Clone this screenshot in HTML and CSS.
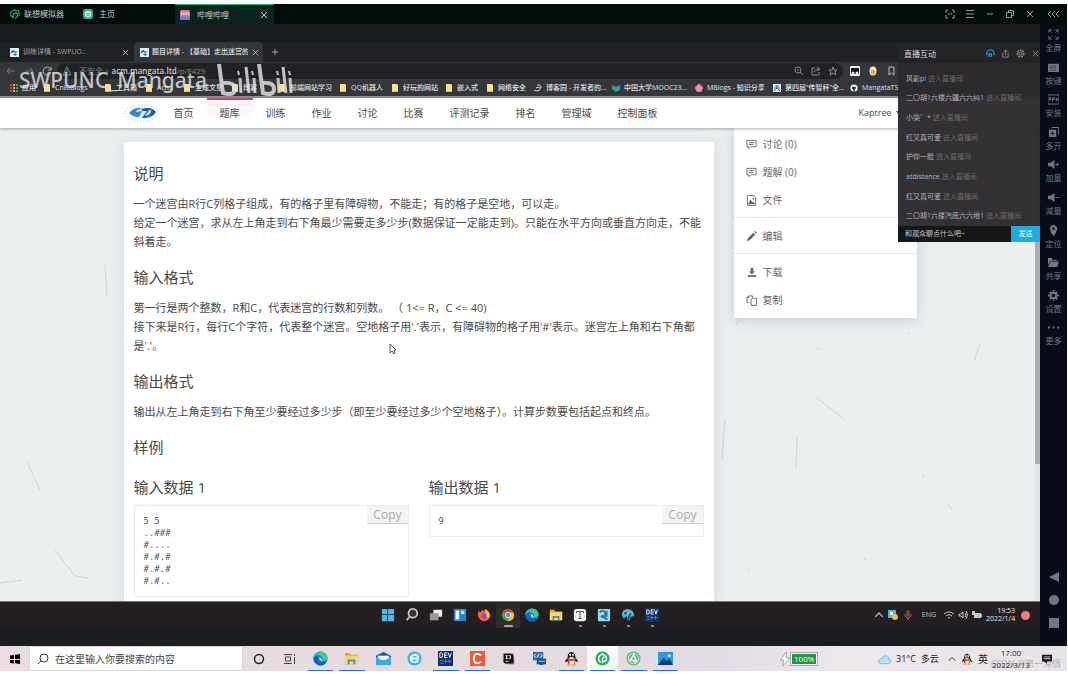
FILE: index.html
```html
<!DOCTYPE html>
<html lang="zh-CN">
<head>
<meta charset="utf-8">
<title>题目详情 - 【基础】走出迷宫的</title>
<link rel="stylesheet" href="styles.css">
</head>
<body>
<svg class="defs" aria-hidden="true">
  <symbol id="site" viewBox="0 0 10 10"><rect width="10" height="10" fill="#e8f1f8"/><path d="M1 4q2-3 4-1t4 0q-1 3-4 2t-4 2zM3 7q3-2 5 0l-2 2z" fill="#2a6fb0"/></symbol>
  <symbol id="folder" viewBox="0 0 8 10"><path d="M1 1h5l1 1v7H1z" fill="#fbe08a"/><path d="M1 8h6v1H1z" fill="#e5b94b"/></symbol>
  <symbol id="x" viewBox="0 0 10 10"><path d="M2 2l6 6M8 2l-6 6" stroke="currentColor" fill="none"/></symbol>
  <symbol id="chat" viewBox="0 0 12 12"><path d="M1 1.500h10v7H5l-2 2v-2H1zM3 4h6M3 6h5" stroke="currentColor" fill="none"/></symbol>
  <symbol id="speaker" viewBox="0 0 12 12"><path d="M0 4h3l4-3v10L3 8H0z" fill="currentColor"/></symbol>
  <symbol id="chevron" viewBox="0 0 8 8"><path d="M1 5.500l3-3 3 3" stroke="currentColor" fill="none"/></symbol>
  <symbol id="edge" viewBox="0 0 16 16"><circle cx="8" cy="8" r="7.500" fill="#1683d3"/><path d="M.5 8C.5 3 5 .5 8 .5c5 0 7.500 4 7.500 6.500 0 3-3 4-6 3 2-2 0-5-3-5-3 0-6 1-6 3z" fill="#42c98d"/><path d="M.5 8c0-3 3-5 6-3-3 1-2 6 2 7 3 0 5-1 6-1-1 3-4 4.500-6 4.500-4.500 0-8-3.500-8-7.500z" fill="#1263b5"/><path d="M.5 8C.5 4 4 1 7 1l3 4Q5 2 .5 8z" fill="#2db4dc"/><path d="M7 7c-1 2 1 4 4 4l-2-1q1-2-2-3z" fill="#e8f6ff"/></symbol>
  <symbol id="explorer" viewBox="0 0 16 16"><path d="M1 2h5l1 2h8v10H1z" fill="#e9aa23"/><path d="M1 5h14v9H1z" fill="#ffd767"/><path d="M4 14V9h8v5h-2v-3H6v3z" fill="#3d8fcf"/></symbol>
  <symbol id="dev" viewBox="0 0 16 16"><rect width="16" height="16" fill="#172d65"/><path d="M2 2v5h1q2 0 2-2.500T3 2zM10 2H7v5h3M7 4.500h3M11 2l1.500 5L14 2" stroke="#fff" fill="none"/><path d="M2 10h4M8 9v4M6 11h4M12 9v4M10 11h4M2 13h4" stroke="#3d8be2" fill="none"/></symbol>
  <symbol id="qq" viewBox="0 0 16 16"><path d="M4 7C3-1 13-1 12 7q3 3 3 5l-3-1-1 3H5l-1-3-3 1q0-2 3-5z" fill="#171717"/><ellipse cx="8" cy="10.500" rx="3.500" ry="4" fill="#fff"/><circle cx="6.500" cy="4" r="1.200" fill="#fff"/><circle cx="9.500" cy="4" r="1.200" fill="#fff"/><path d="M5 6h6l-3 1.500z" fill="#ffb21c"/><path d="M3.500 7.500q4.500 2 9 0v2q-4 1.500-6.500 1V13H4z" fill="#e4322c"/><path d="M3 14h4v1.500H3zM9 14h4v1.500H9z" fill="#f2a11b"/></symbol>
</svg>

<header class="emu-bar">
  <div class="emu-brand">
    <svg viewBox="0 0 12 12"><path d="M4 10.500L1 8V4l4-3 3 1M4 11V6l3-2 2 2v3l-3 2M9 1l2 3v4" stroke="#20b05a" stroke-width="1.500" fill="none"/></svg>
    <span>联想模拟器</span>
  </div>
  <a class="emu-home" href="#home">
    <svg viewBox="0 0 12 12"><rect width="12" height="12" rx="3" fill="#23b889"/><circle cx="6" cy="6" r="3" fill="none" stroke="#fff" stroke-width="1.500"/><circle cx="6" cy="6" r="1" fill="#fff"/></svg>
    <span>主页</span>
  </a>
  <div class="emu-tab">
    <svg viewBox="0 0 12 12"><rect width="12" height="12" rx="2" fill="#f4688f"/><path d="M0 8h12v2q0 2-2 2H2q-2 0-2-2z" fill="#498df0"/><path d="M2 3v3M4 3v3M6 3v3M8 3v3M10 3v3" stroke="#fff"/></svg>
    <span>哔哩哔哩</span>
    <button type="button" aria-label="关闭标签"><svg viewBox="0 0 10 10"><use href="#x"/></svg></button>
  </div>
  <div class="emu-window">
    <button type="button" aria-label="截图"><svg viewBox="0 0 10 10"><path d="M1 4V1h2M7 1h2v3M9 6v3H7M3 9H1V6M3 5h4" stroke="currentColor" fill="none"/></svg></button>
    <button type="button" aria-label="菜单"><svg viewBox="0 0 10 10"><path d="M1 1.500h8M1 5h8M1 8.500h8" stroke="currentColor"/></svg></button>
    <button type="button" aria-label="最小化"><svg viewBox="0 0 10 10"><path d="M2 5h6" stroke="currentColor"/></svg></button>
    <button type="button" aria-label="还原"><svg viewBox="0 0 10 10"><path d="M1.500 3.500h5v5h-5zM3.500 3V1.500h5v5H7" stroke="currentColor" fill="none"/></svg></button>
    <button type="button" aria-label="关闭"><svg viewBox="0 0 10 10"><use href="#x"/></svg></button>
    <button type="button" aria-label="收起"><svg viewBox="0 0 12 10"><path d="M4 2L1 5l3 3M8 2L5 5l3 3M12 2L9 5l3 3" stroke="currentColor" fill="none"/></svg></button>
  </div>
</header>

<div class="stage">
  <main class="screen">
    <div class="browser">
      <div class="tabs">
        <div class="tab"><svg viewBox="0 0 10 10"><use href="#site"/></svg><span>训练详情 - SWPUO.:</span><button type="button" aria-label="关闭"><svg viewBox="0 0 10 10"><use href="#x"/></svg></button></div>
        <div class="tab active"><svg viewBox="0 0 10 10"><use href="#site"/></svg><span>题目详情 - 【基础】走出迷宫的</span><button type="button" aria-label="关闭"><svg viewBox="0 0 10 10"><use href="#x"/></svg></button></div>
        <button class="plus" type="button" aria-label="新标签"><svg viewBox="0 0 10 10"><path d="M5 1v8M1 5h8" stroke="currentColor"/></svg></button>
      </div>
      <div class="address">
        <div class="history">
          <svg viewBox="0 0 10 10"><path d="M9 5H1M4 2L1 5l3 3" stroke="currentColor" fill="none"/></svg>
          <svg viewBox="0 0 10 10"><path d="M1 5h8M6 2l3 3-3 3" stroke="currentColor" fill="none"/></svg>
          <svg class="lit" viewBox="0 0 10 10"><path d="M8.500 3A4 4 0 1 0 9 6M9 1v3H6" stroke="currentColor" fill="none"/></svg>
        </div>
        <div class="url">
          <svg viewBox="0 0 10 10"><path d="M5 1l4 8H1zM5 4v3" stroke="currentColor" fill="none"/></svg>
          <p>不安全 | <b>acm.mangata.ltd</b>/p/F429</p>
          <svg class="push" viewBox="0 0 10 10"><circle cx="4" cy="4" r="3" stroke="currentColor" fill="none"/><path d="M6 6l3 3M3 4h2" stroke="currentColor"/></svg>
          <svg viewBox="0 0 10 10"><path d="M4 2H1v7h7V6M3 6q1-3 5-3M6 1l3 2-3 2" stroke="currentColor" fill="none"/></svg>
          <svg viewBox="0 0 10 10"><path d="M5 1l1 3h3L7 6l1 3-3-2-3 2 1-3-2-2h3z" stroke="currentColor" fill="none"/></svg>
        </div>
        <div class="extensions">
          <svg viewBox="0 0 10 10"><rect width="10" height="10" rx="1" fill="#eee"/><path d="M1 2h8v6H1z" fill="#171717"/><circle cx="3" cy="7" r="1.500" fill="#eee"/><circle cx="7" cy="7" r="1.500" fill="#eee"/></svg>
          <svg viewBox="0 0 10 10"><ellipse cx="5" cy="5" rx="3.500" ry="4.500" fill="#f4eee4"/><circle cx="5" cy="6" r="2.500" fill="#efac45"/></svg>
          <svg viewBox="0 0 10 10"><path d="M3 1h5v8L5.500 7 3 9z" stroke="currentColor" fill="none"/></svg>
        </div>
      </div>
      <nav class="bookmarks" aria-label="书签">
        <a href="#b"><svg viewBox="0 0 8 10"><path d="M1 1v8" stroke="#cf4a39" stroke-width="2" stroke-dasharray="2 1"/><path d="M4 1v8" stroke="#e9b83e" stroke-width="2" stroke-dasharray="2 1"/><path d="M7 1v8" stroke="#43a35b" stroke-width="2" stroke-dasharray="2 1"/></svg>应用</a>
        <a href="#b"><svg><use href="#folder"/></svg>CnBlBlogs</a>
        <a href="#b"><svg><use href="#folder"/></svg>工具箱</a>
        <a href="#b"><svg><use href="#folder"/></svg>Acm</a>
        <a href="#b"><svg><use href="#folder"/></svg>生成文章</a>
        <a href="#b"><svg><use href="#folder"/></svg>博客</a>
        <a href="#b"><svg><use href="#folder"/></svg>前端网站学习</a>
        <a href="#b"><svg><use href="#folder"/></svg>QQ机器人</a>
        <a href="#b"><svg><use href="#folder"/></svg>好玩的网站</a>
        <a href="#b"><svg><use href="#folder"/></svg>嵌入式</a>
        <a href="#b"><svg><use href="#folder"/></svg>网络安全</a>
        <a href="#b"><svg viewBox="0 0 8 10"><path d="M0 7q5 2 6-1T2 5M3 2q4-1 4 3" stroke="#ddd" fill="none"/></svg>博客园 - 开发者的...</a>
        <a href="#b"><svg viewBox="0 0 8 10"><path d="M0 2l4 2v5L0 6z" fill="#3ea25d"/><path d="M4 4l4-2v5L4 9z" fill="#239bd7"/></svg>中国大学MOOC23...</a>
        <a href="#b"><svg viewBox="0 0 8 10"><circle cx="4" cy="3" r="2" fill="#f28eac"/><circle cx="2" cy="5" r="2" fill="#f28eac"/><circle cx="6" cy="5" r="2" fill="#f28eac"/><circle cx="3" cy="7" r="2" fill="#f28eac"/><circle cx="5" cy="7" r="2" fill="#f28eac"/></svg>MBlogs - 知识分享</a>
        <a href="#b"><svg viewBox="0 0 8 10"><rect y="1" width="8" height="8" fill="#e8f2ff"/><path d="M2 3h4M1 5h6M4 2v3L1 8M4 5l3 3" stroke="#2871d3" fill="none"/></svg>第四届“传智杯”全...</a>
        <a href="#b"><svg viewBox="0 0 10 10"><circle cx="5" cy="5" r="4.500" fill="#fff"/><path d="M3 3l1 .5h2L7 3l.5 2.500L6 7v2.500H4V7L2.500 5.500z" fill="#35363a"/></svg>MangataTS</a>
      </nav>
      <div class="watermark">
        <span>SWPUNC_Mangata</span>
        <svg viewBox="0 0 76 36" fill="none" stroke="currentColor" stroke-width="4"><path d="M2 2l4 29q12 3 12-4t-12-6"/><path d="M23 16l1 15M29 5l3 26M37 16l1 15" stroke-width="3"/><path d="M21 9l1 4M35 9l1 4" stroke-width="2"/><path d="M42 2l4 29q11 3 11-4t-11-6"/><path d="M61 16l1 15M66 5l3 26M73 16l1 15" stroke-width="3"/><path d="M60 9l1 4M72 9l1 4" stroke-width="2"/></svg>
      </div>
    </div>

    <nav class="site-nav">
      <div class="site-inner">
        <svg class="logo" viewBox="0 0 37 18"><ellipse cx="18" cy="9" rx="17" ry="8" fill="#fff" stroke="#a9bccb" stroke-dasharray="1 2"/><ellipse cx="19" cy="9" rx="13" ry="6" fill="#d6e8f5"/><path d="M5 9q6-7 14-4-7 0-7 3l6-1-3 6q-6 0-10-4z" fill="#3a86c6"/><path d="M18 5q9-3 14 3-4 6-14 6l5-7h-5zM25 6l-4 6q7-1 6-6z" fill="#145d9f"/></svg>
        <ul>
          <li><a href="#1">首页</a></li><li class="on"><a href="#2">题库</a></li><li><a href="#3">训练</a></li><li><a href="#4">作业</a></li><li><a href="#5">讨论</a></li><li><a href="#6">比赛</a></li><li><a href="#7">评测记录</a></li><li><a href="#8">排名</a></li><li><a href="#9">管理域</a></li><li><a href="#10">控制面板</a></li>
        </ul>
        <a class="user" href="#user">Kaptree <svg viewBox="0 0 6 6"><path d="M0 1h6L3 5z" fill="currentColor"/></svg></a>
      </div>
    </nav>

    <div class="page">
      <svg class="threads" viewBox="0 0 1040 473" preserveAspectRatio="xMinYMin slice" fill="none" stroke="#d0d3d5"><path d="M105 137l2 31M27 334l13 28M55 422l20 26 14 2M0 455l22-3M980 216l-6 17M797 309l-1 31M817 270l27 21M725 291l-3 40M739 190l-3 8"/><path d="M817 221h2M908 205h2M922 348h2M748 442h2M864 431h2M948 377l4 4" stroke="#c8cccf"/></svg>
      <div class="columns">
        <article class="problem">
          <h2>说明</h2>
          <p>一个迷宫由R行C列格子组成，有的格子里有障碍物，不能走；有的格子是空地，可以走。<br>给定一个迷宫，求从左上角走到右下角最少需要走多少步(数据保证一定能走到)。只能在水平方向或垂直方向走，不能<br>斜着走。</p>
          <h2>输入格式</h2>
          <p>第一行是两个整数，R和C，代表迷宫的行数和列数。 （ 1&lt;= R，C &lt;= 40)<br>接下来是R行，每行C个字符，代表整个迷宫。空地格子用'.'表示，有障碍物的格子用'#'表示。迷宫左上角和右下角都<br>是'.'。</p>
          <h2>输出格式</h2>
          <p>输出从左上角走到右下角至少要经过多少步（即至少要经过多少个空地格子）。计算步数要包括起点和终点。</p>
          <h2>样例</h2>
          <div class="samples">
            <section><h2>输入数据 1</h2><div class="code"><pre>5 5
..###
#....
#.#.#
#.#.#
#.#..</pre><button type="button">Copy</button></div></section>
            <section><h2>输出数据 1</h2><div class="code"><pre>9</pre><button type="button">Copy</button></div></section>
          </div>
        </article>
        <aside class="menu">
          <a href="#d"><svg><use href="#chat"/></svg>讨论 (0)</a>
          <a href="#s"><svg><use href="#chat"/></svg>题解 (0)</a>
          <a href="#f"><svg viewBox="0 0 12 12"><path d="M1.500.500h7l2 2v9h-9z" stroke="currentColor" fill="none"/><path d="M2 10l3-5 2 3 1-1 2 3z" fill="currentColor"/><circle cx="8" cy="4" r="1" fill="currentColor"/></svg>文件</a>
          <hr>
          <a href="#e"><svg viewBox="0 0 12 12"><path d="M1 11l1-3 6-6 2 2-6 6zM9 1l1-1 2 2-1 1z" fill="currentColor"/></svg>编辑</a>
          <hr>
          <a href="#l"><svg viewBox="0 0 12 12"><path d="M5 1h3v4h2L6.500 8 3 5h2zM2 9h9v2H2z" fill="currentColor"/></svg>下载</a>
          <a href="#c"><svg viewBox="0 0 12 12"><path d="M3 8H1V3l2-2h4v2M7 3.500h4.500v8h-6V5.500zM3 1v2H1" stroke="currentColor" fill="none"/></svg>复制</a>
        </aside>
      </div>
      <div class="scroll"><div class="thumb"></div></div>
      <svg class="cursor" viewBox="0 0 8 12"><path d="M1 1v9l2-2 2 3 1-1-1-3h2z" fill="#fff" stroke="#555"/></svg>
    </div>

    <footer class="dock">
      <div class="dock-apps">
        <button type="button" aria-label="开始"><svg viewBox="0 0 16 16"><path d="M1 1h6v6H1zM8 1h7v6H8zM1 8h6v7H1zM8 8h7v7H8z" fill="#48b9ef"/></svg></button>
        <button type="button" aria-label="搜索"><svg viewBox="0 0 16 16"><circle cx="9" cy="6" r="5" stroke="#ccc" stroke-width="2" fill="#333"/><path d="M5 10l-3 4" stroke="#ccc" stroke-width="2"/></svg></button>
        <button type="button" aria-label="任务视图"><svg viewBox="0 0 16 16"><path d="M5 2h10v8H5z" fill="#eee"/><path d="M1 6h10v8H1z" fill="#999"/></svg></button>
        <button type="button" aria-label="小组件"><svg viewBox="0 0 16 16"><rect x="1" y="1" width="14" height="14" fill="#2784d5"/><path d="M3 3h4v10H3z" fill="#fff"/><path d="M9 3h4v4H9z" fill="#bce5ff"/></svg></button>
        <button type="button" aria-label="Firefox"><svg viewBox="0 0 16 16"><path d="M2 3l2 2 2-3 2 2 2-3q6 4 5 9-2 5-7 5-6-1-7-7z" fill="#fb6830"/><path d="M9 1q6 4 5 9l-4 1z" fill="#ffc437"/><circle cx="8" cy="9" r="3" fill="#854be0"/></svg></button>
        <button class="current" type="button" aria-label="Chrome"><svg viewBox="0 0 16 16"><circle cx="8" cy="8" r="7" fill="#38a656"/><path d="M2 4q2-3 6-3t6 4H8L5 10z" fill="#df4335"/><path d="M14 5H8l3 5-4 5q8 0 8-7z" fill="#f8c43a"/><circle cx="8" cy="8" r="3" fill="#4889e8" stroke="#fff"/></svg></button>
        <button type="button" aria-label="Edge"><svg><use href="#edge"/></svg></button>
        <button type="button" aria-label="文件"><svg><use href="#explorer"/></svg></button>
        <button class="open" type="button" aria-label="Typora"><svg viewBox="0 0 16 16"><rect x="1" y="1" width="14" height="14" rx="3" fill="#f5f5f5"/><path d="M4 6V4h8v2M8 4v8M6 12h4" stroke="#444" fill="none"/></svg></button>
        <button class="open" type="button" aria-label="工具"><svg viewBox="0 0 16 16"><rect x="1" y="1" width="14" height="14" rx="1" fill="#9ed8ee"/><path d="M3 5q4-4 6 0t-3 5l6 3M11 3v6H5" stroke="#23739a" stroke-width="2" fill="none"/></svg></button>
        <button class="open" type="button" aria-label="画图"><svg viewBox="0 0 16 16"><path d="M1 8q0-7 7-7 7 1 7 8l-4 1-1 4-3-1V9l-4 3z" fill="#55b7d5"/><circle cx="5" cy="6" r="1.500" fill="#17568e"/><circle cx="9" cy="4" r="1" fill="#ee9a47"/><path d="M7 15l4-9" stroke="#244c80" stroke-width="2"/></svg></button>
        <button class="open" type="button" aria-label="Dev-C++"><svg><use href="#dev"/></svg></button>
      </div>
      <div class="dock-tray">
        <svg viewBox="0 0 8 8"><use href="#chevron"/></svg>
        <svg viewBox="0 0 10 10"><path d="M0 0h8v8H0z" fill="#45b5e9"/><circle cx="7" cy="7" r="3" fill="#f0c137"/><path d="M2 2h3v3H2z" fill="#fff"/></svg>
        <svg class="mic" viewBox="0 0 10 10"><path d="M4 1h2v5H4zM2 4v2l2 2h2l2-2V4M5 8v2" stroke="#b45a67" fill="none"/></svg>
        <span class="lang">ENG</span>
        <svg viewBox="0 0 10 10"><path d="M0 4q5-4 10 0M2 6q3-3 6 0M4 8q1-1 2 0" stroke="currentColor" fill="none"/></svg>
        <svg viewBox="0 0 10 10"><path d="M1 4h2l2-2v6L3 6H1zM7 3q2 2 0 4M8 1q3 4 0 8" stroke="currentColor" fill="none"/></svg>
        <svg viewBox="0 0 10 10"><path d="M2 3h7v5H2zM9 4h1v3H9zM0 1h3v4H0z" fill="currentColor"/></svg>
        <p class="clock">19:53<br>2022/1/4</p>
        <span class="badge"></span>
      </div>
    </footer>

    <section class="live">
      <header><h3>直播互动</h3>
        <svg class="blue" viewBox="0 0 10 10"><path d="M1 7V5a4 4 0 0 1 8 0v2M3.500 9V5.500H6V9" stroke="currentColor" stroke-width="1.500" fill="none"/></svg>
        <svg viewBox="0 0 10 10"><path d="M2 4v5h6V4M5 7V1M3 3l2-2 2 2" stroke="currentColor" fill="none"/></svg>
        <svg viewBox="0 0 10 10"><circle cx="5" cy="5" r="3.500" stroke="currentColor" stroke-width="2" stroke-dasharray="2 1" fill="none"/><circle cx="5" cy="5" r="1.500" stroke="currentColor" fill="none"/></svg>
        <button type="button" aria-label="关闭互动"><svg viewBox="0 0 10 10"><use href="#x"/></svg></button>
      </header>
      <ul>
        <li><b>风影pi</b> 进入直播间</li><li><b>二〇胡1六楼六疆六六纠1</b> 进入直播间</li><li><b>小柒゛*</b> 进入直播间</li><li><b>红又真可爱</b> 进入直播间</li><li><b>护你一脸</b> 进入直播间</li><li><b>atdistance</b> 进入直播间</li><li><b>红又真可爱</b> 进入直播间</li><li><b>二〇胡1六楼汽底六六地1</b> 进入直播间</li>
      </ul>
      <form><input type="text" aria-label="弹幕" placeholder="和观众聊点什么吧~"><button type="button">发送</button></form>
    </section>
  </main>

  <aside class="tools">
    <div class="tool-list">
      <button type="button"><svg viewBox="0 0 12 12"><path d="M1 4V1h3M1 1l3 3M8 1h3v3M11 1L8 4M11 8v3H8M11 11L8 8M4 11H1V8M1 11l3-3" stroke="currentColor" fill="none"/></svg>全屏</button>
      <button type="button"><svg viewBox="0 0 12 12"><rect y="2" width="12" height="9" rx="1" fill="currentColor"/><path d="M2 4.500h8M2 6.500h8M3 9h6" stroke="#080d18" stroke-dasharray="1 1"/></svg>按键</button>
      <button type="button"><svg viewBox="0 0 12 12"><path d="M0 3V1h12v2M0 9v2h12V9M1 8V4h2v2H1M5 8V4h2v2H5M9 8V4M11 8V4M9 6h2" stroke="currentColor" fill="none"/></svg>安装</button>
      <button type="button"><svg viewBox="0 0 12 12"><path d="M1 3h8v8H1zM4 0h8v8h-1V1H4z" fill="currentColor"/><path d="M5 5v4M3 7h4" stroke="#080d18"/></svg>多开</button>
      <button type="button"><svg viewBox="0 0 12 12"><use href="#speaker"/><path d="M8 6h4M10 4v4" stroke="currentColor"/></svg>加量</button>
      <button type="button"><svg viewBox="0 0 12 12"><use href="#speaker"/><path d="M8 6h4" stroke="currentColor"/></svg>减量</button>
      <button type="button"><svg viewBox="0 0 12 12"><path d="M6 0a4 4 0 0 1 4 4.500Q9 9 6 12 3 9 2 4.500A4 4 0 0 1 6 0z" fill="currentColor"/><circle cx="6" cy="4" r="1.500" fill="#080d18"/></svg>定位</button>
      <button type="button"><svg viewBox="0 0 12 12"><path d="M0 1h4l1 2h5v1H3L0 9z" fill="currentColor"/><path d="M3 5h9l-2 6H0z" fill="currentColor"/></svg>共享</button>
      <button type="button"><svg viewBox="0 0 12 12"><circle cx="6" cy="6" r="3" stroke="currentColor" stroke-width="2" fill="none"/><path d="M6 0v2M6 10v2M0 6h2M10 6h2M2 2l2 2M8 8l2 2M10 2L8 4M4 8l-2 2" stroke="currentColor" stroke-width="2"/></svg>设置</button>
      <button type="button"><svg viewBox="0 0 12 12"><path d="M0 6h2M5 6h2M10 6h2" stroke="currentColor" stroke-width="2"/></svg>更多</button>
    </div>
    <div class="system-keys">
      <button type="button" aria-label="返回"><svg viewBox="0 0 10 10"><path d="M10 0v10L0 5z" fill="currentColor"/></svg></button>
      <button type="button" aria-label="主屏"><svg viewBox="0 0 10 10"><circle cx="5" cy="5" r="5" fill="currentColor"/></svg></button>
      <button type="button" aria-label="最近"><svg viewBox="0 0 10 10"><path d="M0 0h10v10H0z" fill="currentColor"/></svg></button>
    </div>
  </aside>
</div>

<footer class="taskbar">
  <button class="start" type="button" aria-label="开始"><svg viewBox="0 0 10 10"><path d="M0 1.500l4-.5v4H0zM5 1l5-1v5H5zM0 6h4v3.500L0 9zM5 6h5v4l-5-.8z" fill="#000"/></svg></button>
  <label class="search"><svg viewBox="0 0 12 12"><circle cx="7" cy="5" r="4" stroke="#333" fill="none"/><path d="M4 8l-3 3" stroke="#333"/></svg><input type="text" placeholder="在这里输入你要搜索的内容"></label>
  <button class="sys" type="button" aria-label="Cortana"><svg viewBox="0 0 12 12"><circle cx="6" cy="6" r="4.500" stroke="#222" stroke-width="1.500" fill="none"/></svg></button>
  <button class="sys" type="button" aria-label="任务视图"><svg viewBox="0 0 12 12"><path d="M0 1.500h8M1.500 4v4h5V4zM0 10.500h8M10.500 1v2M10.500 4v7" stroke="#444" fill="none"/></svg></button>
  <div class="apps">
    <button class="run" type="button" aria-label="Edge"><svg><use href="#edge"/></svg></button>
    <button class="run" type="button" aria-label="文件"><svg><use href="#explorer"/></svg></button>
    <button type="button" aria-label="邮件"><svg viewBox="0 0 16 16"><path d="M0 5l8-4 8 4v10H0z" fill="#0f5fa5"/><path d="M2 5h12v5H2z" fill="#eef9ff"/><path d="M0 6l8 5 8-5v9H0z" fill="#36ade9"/></svg></button>
    <button type="button" aria-label="浏览器"><svg viewBox="0 0 16 16"><circle cx="8" cy="8" r="7.500" fill="#31b5e8"/><path d="M4 8h8q0-4-4-4-4 1-4 4 0 4 5 4l3-2" stroke="#fff" stroke-width="2" fill="none"/></svg></button>
    <button class="run" type="button" aria-label="Dev-C++"><svg><use href="#dev"/></svg></button>
    <button class="run" type="button" aria-label="C"><svg viewBox="0 0 16 16"><rect width="16" height="16" fill="#f2583a"/><path d="M12 5Q10 3 8 3 4 3 4 8t4 5q2 0 4-2" stroke="#fff" stroke-width="2" fill="none"/></svg></button>
    <button type="button" aria-label="IDEA"><svg viewBox="0 0 16 16"><path d="M2 2h7l5 3v9H5l-3-3z" fill="#d53d90"/><path d="M2 2h6v7H2z" fill="#f78b36"/><path d="M9 8h5v6H9z" fill="#326de6"/><rect x="3" y="3" width="10" height="10" fill="#111"/><path d="M5 5h2M6 5v3M5 8h2M8 5h2v3H8M5 11h3" stroke="#fff" fill="none"/></svg></button>
    <button type="button" aria-label="远程"><svg viewBox="0 0 16 16"><rect x="1" y="1" width="11" height="9" fill="#336da9"/><path d="M4 3L2 5l2 2M9 3l2 2-2 2M7 3L6 7" stroke="#fff" fill="none"/><path d="M6 8h9v6h-3v1H8v-1H5v-3z" fill="#174f88"/><path d="M7 11h7" stroke="#9cd4f3"/></svg></button>
    <button class="run" type="button" aria-label="QQ"><svg><use href="#qq"/></svg></button>
    <button class="run front" type="button" aria-label="模拟器"><svg viewBox="0 0 16 16"><circle cx="8" cy="8" r="7.500" fill="#28ad61"/><path d="M6 12l-2-2V6l4-3 4 3v4l-4 2V8l2-2" stroke="#fff" fill="none" stroke-width="1.500"/></svg></button>
    <button class="run" type="button" aria-label="助手"><svg viewBox="0 0 16 16"><circle cx="8" cy="8" r="7.500" fill="#65b883"/><circle cx="8" cy="8" r="5.500" stroke="#dceedd" fill="none"/><path d="M4 11l4-7 3 6H6l6 2" stroke="#fff" stroke-width="1.500" fill="none"/></svg></button>
    <button class="run" type="button" aria-label="照片"><svg viewBox="0 0 16 16"><rect y="1" width="16" height="14" fill="#2798e5"/><path d="M0 15l6-8 3 4 3-3 4 7z" fill="#123e70"/><circle cx="12" cy="5" r="1.500" fill="#fff"/></svg></button>
  </div>
  <div class="tray">
    <div class="battery"><svg viewBox="0 0 8 12"><path d="M5 0L0 7h3l-1 5 6-7H5z" fill="#fff" stroke="#777" stroke-width=".5"/></svg><span>100%</span></div>
    <div class="weather"><svg viewBox="0 0 14 12"><path d="M3 11q-3 0-2-4 1-2 3-1 2-5 6-3 2 1 2 3 3 4-1 5z" fill="#b6e3fa" stroke="#71bce4"/></svg><span>31°C</span><span>多云</span></div>
    <svg class="up" viewBox="0 0 8 8"><use href="#chevron"/></svg>
    <svg class="tray-qq"><use href="#qq"/></svg>
    <span class="ime">英</span>
    <p class="clock">17:00<br>2022/3/13</p>
    <button type="button" aria-label="通知"><svg viewBox="0 0 12 12"><path d="M0 1h12v8H6v3L3 9H0z" fill="#111"/><path d="M2 3.500h8M2 5.500h8" stroke="#ddd"/></svg></button>
  </div>
  <span class="credit">CSDN @第一深情</span>
</footer>
</body>
</html>
```

FILE: styles.css
```css
* { box-sizing: border-box; }
body {
  margin: 0;
  padding: 4px 1px 3px 0;
  height: 100vh;
  display: flex;
  flex-direction: column;
  overflow: hidden;
  background: #fff;
  color: #4a4a4a;
  font: 10px/14px "Open Sans", "Noto Sans CJK SC", sans-serif;
}
h2, h3, p, ul, pre { margin: 0; padding: 0; }
ul { list-style: none; }
a { color: inherit; text-decoration: none; }
button { border: 0; padding: 0; background: none; color: inherit; font: inherit; display: grid; place-items: center; }
input { border: 0; padding: 0; min-width: 0; background: none; font: inherit; outline: 0; }
svg { width: 10px; height: 10px; flex: none; display: block; }
.defs { position: absolute; width: 0; height: 0; }

.emu-bar { display: flex; height: 20px; flex: none; background: #020d0a; color: #c2cbc8; font-size: 8px; }
.emu-brand, .emu-home { display: flex; align-items: center; gap: 4px; }
.emu-brand { width: 83px; padding-left: 10px; }
.emu-home { width: 92px; gap: 6px; }
.emu-tab { display: flex; align-items: center; gap: 7px; width: 99px; padding: 0 5px; background: #072320; border-top: 1px solid #2ca56f; }
.emu-tab button { margin-left: auto; }
.emu-window { display: flex; margin-left: auto; align-items: center; gap: 10px; padding-right: 8px; color: #8f9a97; }
.emu-window button:last-child { margin-left: 2px; }
.emu-window button:last-child svg { width: 12px; }

.stage { display: flex; flex: 1; min-height: 0; background: #191d1f; }
.screen { position: relative; flex: 1; min-width: 0; display: flex; flex-direction: column; padding: 18px 0; }

.browser { position: relative; background: #202124; color: #b9babd; font-size: 7px; line-height: 10px; }
.tabs { display: flex; height: 20px; }
.tab { display: flex; align-items: center; gap: 4px; width: 134px; padding: 0 4px 0 10px; white-space: nowrap; }
.tab span { flex: 1; min-width: 0; overflow: hidden; color: #a5a6aa; }
.tab svg { width: 9px; height: 9px; }
.tab.active { width: 129px; padding: 0 3px 0 6px; gap: 3px; background: #35363a; border-radius: 5px 5px 0 0; }
.tab.active span { color: #e0e1e4; font-weight: 500; }
.plus { width: 24px; }
.plus svg { width: 8px; }
.address { display: flex; align-items: center; height: 17px; background: #35363a; }
.history { display: flex; gap: 8px; padding-left: 6px; width: 57px; color: #77797e; }
.lit { color: #bbb; }
.url { display: flex; align-items: center; gap: 7px; height: 16px; width: 786px; padding: 0 5px; border-radius: 8px; background: #202124; font-size: 8px; color: #85878b; }
.url b { font-weight: 600; color: #ccc; }
.url p { font-size: 8px; }
.push { margin-left: auto; }
.extensions { display: flex; gap: 8px; padding-left: 7px; }
.bookmarks { display: grid; grid-template-columns: 33px 61px 41px 38px 48px 47px 61px 52px 54px 41px 48px 78px 83px 78px 77px 60px; height: 19px; padding-left: 10px; background: #35363a; border-bottom: 2px solid #8f9092; color: #e2e2e4; font-weight: 500; }
.bookmarks a { display: flex; align-items: center; gap: 4px; white-space: nowrap; }
.bookmarks svg { width: 8px; }
.watermark { position: absolute; left: 19px; bottom: 0; z-index: 3; display: flex; align-items: center; gap: 10px; color: rgba(222, 222, 222, .85); }
.watermark span { font: 500 21px/34px "Noto Sans", sans-serif; }
.watermark svg { width: 76px; height: 36px; }

.site-nav { position: relative; z-index: 1; background: #fff; box-shadow: 0 1px 3px rgba(0, 0, 0, .3); }
.site-inner { display: flex; align-items: center; height: 30px; max-width: 793px; margin: 0 auto; }
.logo { width: 37px; height: 18px; }
.site-nav ul { display: flex; flex: 1; }
.site-nav li a { display: block; padding: 0 13px; line-height: 30px; white-space: nowrap; }
.site-nav .on a { background: linear-gradient(#fdf1f4, #fff 80%); box-shadow: inset 0 2px #b94a6c; }
.user { display: flex; align-items: center; gap: 4px; width: 58px; font-size: 9px; }
.user svg { width: 6px; height: 6px; }

.page { position: relative; flex: 1; min-height: 0; overflow: hidden; background: #eceff0; }
.threads { position: absolute; inset: 0; width: 100%; height: 100%; }
.columns { position: relative; display: flex; align-items: flex-start; gap: 20px; max-width: 793px; margin: 0 auto; }
.problem { flex: 1; min-width: 0; margin-top: 14px; padding: 20px 10px; background: #fff; box-shadow: 0 2px 14px rgba(100, 130, 150, .22); }
.problem h2 { margin-bottom: 10px; font-size: 15px; line-height: 22px; font-weight: 400; color: #484848; }
.problem p { margin-bottom: 15px; font-size: 11px; line-height: 19px; white-space: nowrap; }
.samples { display: grid; grid-template-columns: 1fr 1fr; gap: 20px; margin-top: 18px; }
.samples h2 { margin-bottom: 7px; }
.code { position: relative; border: 1px solid #ececec; }
.code pre { padding: 9px; font: 9px/12px "DejaVu Sans Mono", monospace; color: #555; }
.code button { position: absolute; right: 0; top: 0; padding: 0 6px; background: #f4f4f4; border-bottom: 1px solid #ccc; color: #aaa; font-size: 12px; line-height: 17px; }
.menu { width: 183px; padding: 2px 0 4px; background: #fff; box-shadow: 0 2px 12px rgba(100, 130, 150, .3); color: #666; }
.menu a { display: flex; align-items: center; gap: 6px; height: 28px; padding-left: 12px; }
.menu svg { width: 11px; height: 11px; }
.menu hr { margin: 3px 0 4px; border: 0; border-top: 1px solid #e5e5e5; }
.scroll { position: absolute; right: 0; top: 0; bottom: 0; width: 5px; background: #dfe4e7; }
.thumb { height: 71%; background: #a9aeb1; }
.cursor { position: absolute; left: 389px; top: 215px; width: 8px; height: 12px; }

.dock { position: relative; display: flex; align-items: center; justify-content: center; height: 27px; flex: none; background: #231f20; border-top: 1px solid #77797a; color: #c5c5c5; }
.dock-apps { display: flex; }
.dock-apps button { position: relative; width: 24px; height: 25px; }
.dock-apps svg { width: 14px; height: 14px; }
.current { background: #302b2d; }
.current::after, .open::after { content: ""; position: absolute; bottom: 1px; width: 9px; height: 2px; border-radius: 1px; background: #dc939c; }
.open::after { width: 3px; background: #999; }
.dock-tray { position: absolute; right: 10px; display: flex; align-items: center; gap: 4px; font-size: 7px; }
.dock-tray .mic { margin: 0 5px 0 1px; }
.dock-tray .lang { margin-right: 4px; }
.dock-tray .clock { width: 29px; text-align: right; line-height: 8px; color: #e5e5e5; }
.badge { width: 9px; height: 9px; margin-left: 2px; border-radius: 50%; background: #ec7d88; }

.live { position: absolute; z-index: 4; right: 0; top: 20px; width: 142px; background: rgba(44, 42, 44, .97); color: #6b696c; font-size: 7px; line-height: 10px; }
.live header { display: flex; align-items: center; gap: 6px; height: 19px; padding-left: 6px; background: #242326; color: #8f8f92; }
.live h3 { flex: 1; font-size: 8px; font-weight: 400; color: #ddd; }
.live .blue { color: #229ac7; }
.live header svg { width: 9px; height: 9px; }
.live ul { display: flex; flex-direction: column; height: 163px; padding-top: 6px; }
.live li { display: flex; flex: 1; align-items: center; gap: 2px; padding: 0 8px; white-space: nowrap; }
.live b { color: #b4b3c2; font-weight: 400; }
.live form { display: flex; height: 16px; background: #171719; }
.live input { flex: 1; padding-left: 7px; color: #ccc; }
.live input::placeholder { color: #ccc; opacity: 1; }
.live form button { width: 29px; background: #1cabe3; color: #fff; }

.tools { display: flex; flex-direction: column; justify-content: space-between; width: 27px; padding: 3px 0 18px; background: #070c16; color: #737880; font-size: 8px; line-height: 10px; }
.tool-list { display: flex; flex-direction: column; height: 326px; }
.tool-list button { flex: 1; display: flex; flex-direction: column; align-items: center; gap: 3px; padding-top: 2px; }
.tool-list svg { width: 11px; height: 11px; }
.system-keys { display: grid; gap: 13px; justify-items: center; }

.taskbar { position: relative; display: flex; align-items: stretch; height: 25px; flex: none; background: linear-gradient(90deg, #ecdce3, #e5dade 45%, #e3dce6 68%, #eee8ec 80%, #e8e3e8); color: #222; }
.start { width: 29px; }
.search { display: flex; align-items: center; gap: 6px; width: 214px; padding-left: 7px; background: #fff; border: 1px solid #dcd5d9; }
.search input { flex: 1; color: #444; }
.search input::placeholder { color: #444; opacity: 1; }
.search svg, .sys svg { width: 12px; height: 12px; }
.sys { width: 31px; }
.apps { display: flex; width: 376px; }
.apps button { position: relative; flex: 1; }
.apps svg { width: 15px; height: 15px; }
.apps .front { background: #faf8fa; }
.run::after { content: ""; position: absolute; left: 3px; right: 3px; bottom: 0; height: 1px; background: #1c77c5; }
.tray { display: flex; align-items: center; margin-left: auto; padding-right: 15px; }
.battery { display: flex; align-items: center; width: 98px; gap: 1px; }
.battery svg { height: 14px; }
.battery span { padding: 0 2px; border: 1px solid #fff; outline: 1px solid #aaa; background: #239644; color: #fff; font-size: 8px; line-height: 10px; }
.weather { display: flex; align-items: center; gap: 5px; width: 70px; }
.weather svg { width: 13px; height: 12px; }
.weather span { font-size: 9px; white-space: nowrap; }
.up { width: 8px; height: 8px; }
.tray-qq { width: 12px; height: 12px; margin: 0 5px; }
.ime { width: 12px; }
.tray .clock { width: 42px; margin: 0 10px 0 0; text-align: center; font-size: 8px; line-height: 12px; }
.credit { position: absolute; right: 6px; bottom: 0; color: rgba(130, 125, 130, .55); font-size: 9px; }
```
